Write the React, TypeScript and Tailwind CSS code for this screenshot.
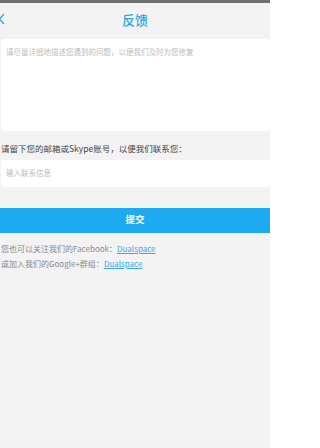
import React from "react";

export default function App() {
  return (
    <div
      className="w-[270px] h-[448px] bg-[#f3f3f3] overflow-hidden flex flex-col"
      style={{ fontFamily: '"Noto Sans CJK SC", "Noto Sans", sans-serif' }}
    >
      <div className="h-[3px] bg-[#707070]" />
      <div className="h-[32px] flex items-center relative">
        <svg className="absolute left-[-2px] top-[10px]" width="8" height="12" viewBox="0 0 8 12">
          <path d="M6 1 L1.5 6 L6 11" stroke="#3aa8e2" strokeWidth="1.4" fill="none" />
        </svg>
        <div className="flex-1 text-center text-[13px] text-[#2fa6e1] font-medium leading-none pt-[1px]">反馈</div>
      </div>
      <div className="mt-[4px] h-[92px] bg-white rounded-[4px] ml-[1px] px-[5px] pt-[9px]">
        <div className="text-[7.5px] text-[#bdbdbd] leading-none">
          请尽量详细地描述您遇到的问题，以便我们及时为您修复
        </div>
      </div>
      <div className="mt-[13px] text-[8.5px] text-[#444] leading-none pl-[1px]">
        请留下您的邮箱或Skype账号，以便我们联系您：
      </div>
      <div className="mt-[7px] h-[27px] bg-white rounded-[4px] ml-[1px] flex items-center px-[5px]">
        <span className="text-[7.5px] text-[#bdbdbd] leading-none">输入联系信息</span>
      </div>
      <div className="mt-[21px] h-[25px] bg-[#1eaaf1] flex items-center justify-center">
        <span className="text-[9.5px] text-white font-bold leading-none">提交</span>
      </div>
      <div className="mt-[12px] text-[8px] text-[#8a8a8a] leading-none pl-[1px] whitespace-nowrap">
        您也可以关注我们的Facebook：<span className="text-[#3aa8e2] underline">Dualspace</span>
      </div>
      <div className="mt-[7px] text-[8px] text-[#8a8a8a] leading-none pl-[1px] whitespace-nowrap">
        或加入我们的Google+群组：<span className="text-[#3aa8e2] underline">Dualspace</span>
      </div>
    </div>
  );
}
